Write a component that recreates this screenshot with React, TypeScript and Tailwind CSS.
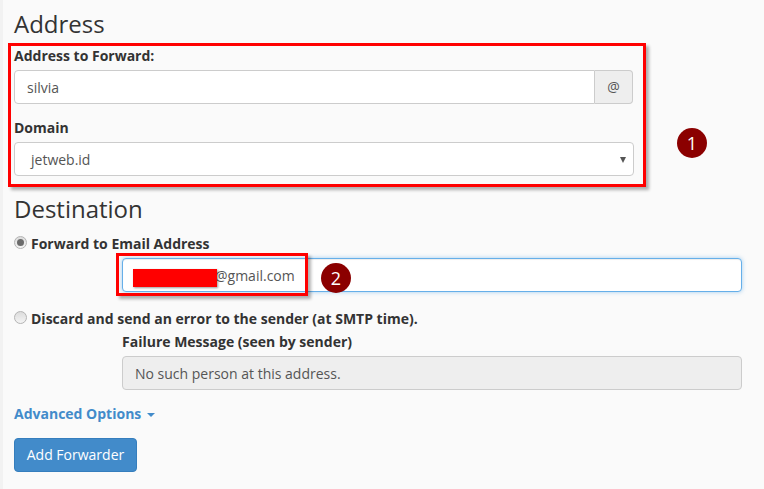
const font = { fontFamily: '"Open Sans", sans-serif' };

function Badge({ n, className }: { n: number; className: string }) {
  return (
    <div className={`absolute flex h-[30px] w-[30px] items-center justify-center rounded-full bg-[#8b0000] text-[18px] text-white ${className}`}>
      {n}
    </div>
  );
}

function Radio({ checked }: { checked?: boolean }) {
  return (
    <span className="mt-[2px] flex h-[13px] w-[13px] shrink-0 items-center justify-center rounded-full border border-[#b4b4b4] bg-gradient-to-b from-[#dcdcdc] to-[#f4f4f4]">
      {checked && <span className="h-[7px] w-[7px] rounded-full bg-[#6b6b6b]" />}
    </span>
  );
}

export default function App() {
  return (
    <div className="relative h-[489px] w-[764px] overflow-hidden border-l-[3px] border-[#f2f2f2] bg-[#fafafa] pl-[11px] text-[14px] leading-[20px] text-[#333]" style={font}>
      <h2 className="pt-[7px] text-[24px] leading-[33px] text-[#333]">Address</h2>

      <label className="mt-[6px] block h-[20px] font-bold">Address to Forward:</label>
      <div className="mt-[4px] flex h-[34px] w-[619px]">
        <div className="flex flex-1 items-center rounded-l border border-[#ccc] bg-white px-[12px] pt-[1px] text-[#555]">silvia</div>
        <div className="flex w-[38px] items-center justify-center rounded-r border border-l-0 border-[#ccc] bg-[#eee] text-[#555]">@</div>
      </div>

      <label className="mt-[14px] block h-[20px] font-bold">Domain</label>
      <div className="mt-[4px] flex h-[34px] w-[620px] items-center justify-between rounded border border-[#ccc] bg-white pl-[16px] pr-[7px] pt-[1px] text-[#555]">
        <span>jetweb.id</span>
        <svg width="6" height="6" viewBox="0 0 6 6"><path d="M0 0h6L3 6z" fill="#555" /></svg>
      </div>

      <h2 className="mt-[16px] text-[24px] leading-[33px] text-[#333]">Destination</h2>

      <div className="mt-[9px] flex h-[20px] items-start gap-[4px] font-bold">
        <Radio checked />
        <span>Forward to Email Address</span>
      </div>
      <div className="ml-[108px] mt-[4px] flex h-[34px] w-[620px] items-center rounded border border-[#66afe9] bg-white pl-[92px] pt-[1px] text-[#555] shadow-[inset_0_1px_1px_rgba(0,0,0,0.075),0_0_4px_rgba(102,175,233,0.6)]">
        @gmail.com
      </div>

      <div className="mt-[17px] flex h-[20px] items-start gap-[4px] font-bold">
        <Radio />
        <span>Discard and send an error to the sender (at SMTP time).</span>
      </div>
      <label className="ml-[108px] mt-[3px] block h-[20px] font-bold">Failure Message (seen by sender)</label>
      <div className="ml-[108px] mt-[4px] flex h-[34px] w-[620px] items-center rounded border border-[#ccc] bg-[#eee] px-[12px] pt-[1px] text-[#555]">
        No such person at this address.
      </div>

      <div className="mt-[14px] flex h-[20px] items-center gap-[6px] font-bold text-[#428bca]">
        <span>Advanced Options</span>
        <span className="mt-[2px] h-0 w-0 border-x-[4px] border-t-[4px] border-x-transparent border-t-[#428bca]" />
      </div>

      <button className="mt-[14px] flex h-[34px] w-[123px] items-center justify-center rounded border border-[#357ebd] bg-[#428bca] text-white">
        Add Forwarder
      </button>

      {/* annotations drawn on top of the screenshot */}
      <div className="absolute left-[5px] top-[43px] h-[144px] w-[638px] border-[3px] border-[#f00] shadow-[3px_3px_3px_rgba(0,0,0,0.3)]" />
      <div className="absolute left-[113px] top-[253px] h-[43px] w-[192px] border-[3px] border-[#f00] shadow-[3px_3px_3px_rgba(0,0,0,0.3)]" />
      <div className="absolute left-[130px] top-[269px] h-[18px] w-[84px] bg-[#f00] shadow-[1px_1px_2px_rgba(0,0,0,0.4)]" />
      <Badge n={1} className="left-[674px] top-[128px]" />
      <Badge n={2} className="left-[318px] top-[263px]" />
    </div>
  );
}
